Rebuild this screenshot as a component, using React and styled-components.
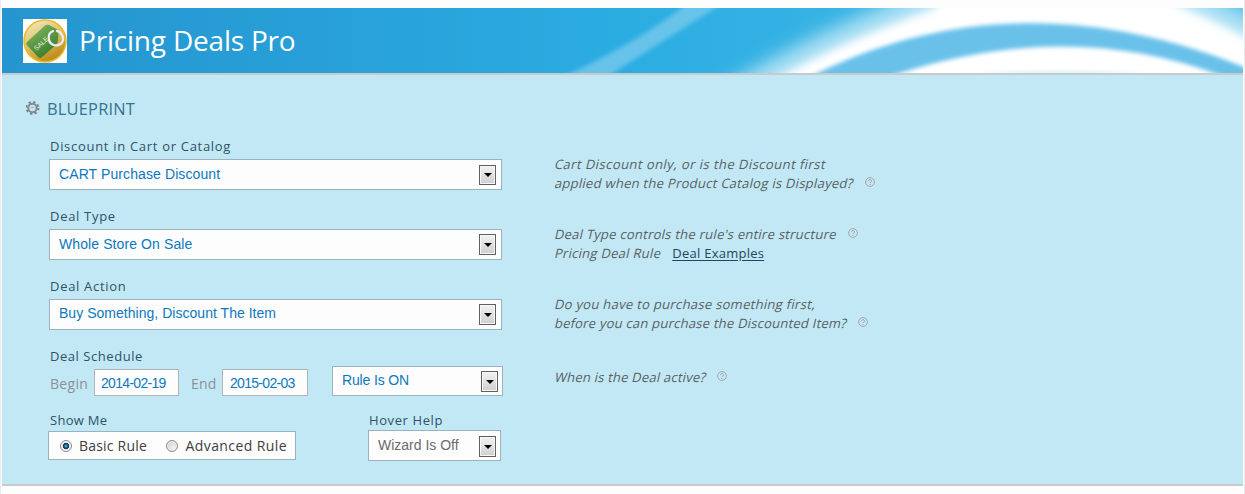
import React from "react";
import styled, { createGlobalStyle } from "styled-components";

const Global = createGlobalStyle`
  *, *::before, *::after { box-sizing: border-box; }
  html, body { margin: 0; background: #fdfdfd; overflow: hidden; }
  body { font-family: "Open Sans", "Noto Sans", sans-serif; }
`;

const Page = styled.div`
  height: 494px;
  padding: 8px 2px 0 2px;
  background: #fdfdfd;
  box-shadow: inset 1px 0 #ececec, inset -1px 0 #ececec;
`;

const Banner = styled.header`
  position: relative;
  height: 67px;
  display: flex;
  align-items: center;
  gap: 12px;
  padding: 0 21px 0 21px;
  border-bottom: 2px solid #c9cacb;
  overflow: hidden;
`;

const BannerArt = styled.svg`
  position: absolute;
  inset: 0;
  display: block;
`;

const Logo = styled.svg`
  position: relative;
  width: 44px;
  height: 44px;
  display: block;
`;

const Title = styled.h1`
  position: relative;
  margin: 0 0 2px;
  font-weight: 400;
  font-size: 28px;
  line-height: 40px;
  letter-spacing: ${(p) => p.$track || 0}px;
  color: #fff;
  white-space: nowrap;
`;

const Panel = styled.main`
  height: 411px;
  padding: 22px 0 0 24px;
  background: #c2e8f5;
  border-bottom: 2px solid #c9cacb;
`;

const SectionHead = styled.div`
  display: flex;
  align-items: center;
  gap: 7px;
  height: 24px;
`;

const SectionTitle = styled.h2`
  margin: 0;
  font-weight: 400;
  font-size: 16.4px;
  line-height: 24px;
  letter-spacing: ${(p) => p.$track || 0}px;
  color: #36738f;
`;

const Columns = styled.div`
  display: grid;
  grid-template-columns: 455px auto;
  column-gap: 51px;
  padding: 16px 0 0 23px;
`;

const Fields = styled.div`
  display: flex;
  flex-direction: column;
`;

const Field = styled.div`
  height: ${(p) => p.$h}px;
`;

const Label = styled.div`
  padding-left: ${(p) => p.$pad || 1}px;
  height: ${(p) => p.$h || 22}px;
  font-size: 13px;
  line-height: 18px;
  letter-spacing: ${(p) => p.$track || 0.7}px;
  color: #2f5266;
  white-space: nowrap;
`;

const Select = styled.div`
  display: flex;
  justify-content: space-between;
  align-items: flex-start;
  width: ${(p) => p.$w}px;
  height: ${(p) => p.$h || 31}px;
  padding: 5px ${(p) => p.$right || 5}px 0 9px;
  background: #fdfdfd;
  border: 1px solid #9bb3bd;
  color: ${(p) => (p.$muted ? "#6c6c6c" : "#0d78bf")};
  font-family: "Liberation Sans", Arial, sans-serif;
  font-size: 14px;
  line-height: ${(p) => p.$lh || 18}px;
  letter-spacing: ${(p) => p.$track || 0}px;
  white-space: nowrap;
`;

const ArrowBox = styled.span`
  display: flex;
  align-items: center;
  justify-content: center;
  width: 17px;
  height: ${(p) => p.$h || 21}px;
  margin-top: ${(p) => p.$drop || 0}px;
  border: 1px solid #606060;
  background: linear-gradient(#f2f2f2, #cfcfcf);
  box-shadow: inset 0 0 0 1px #f7f7f7;
`;

const Schedule = styled.div`
  display: flex;
  align-items: flex-start;
  margin-top: -3px;
`;

const Caption = styled.span`
  width: ${(p) => p.$w}px;
  padding: ${(p) => p.$pad || "0"};
  margin-top: 8px;
  font-size: 14px;
  line-height: 20px;
  letter-spacing: ${(p) => p.$track || 0}px;
  color: #8a9195;
`;

const DateBox = styled.div`
  width: ${(p) => p.$w}px;
  height: 27px;
  margin: 3px ${(p) => p.$gap}px 0 0;
  padding-left: ${(p) => p.$pad || 6}px;
  border: 1px solid #adb5b8;
  background: #fdfdfd;
  color: #0d78bf;
  font: 14px/26px "Liberation Sans", Arial, sans-serif;
  letter-spacing: -0.7px;
`;

const Bottom = styled.div`
  display: flex;
  justify-content: space-between;
  width: 453px;
  margin-left: -1px;
`;

const RadioGroup = styled.div`
  display: flex;
  align-items: center;
  width: 248px;
  height: 29px;
  padding-left: 11px;
  background: #fdfdfd;
  border: 1px solid #9bb3bd;
`;

const Radio = styled.span`
  width: 12px;
  height: 12px;
  flex: none;
  border: 1px solid #8b8b8b;
  border-radius: 50%;
  box-shadow: inset 0 0 0 1px #f4f4f4;
  background: ${(p) =>
    p.$on
      ? "radial-gradient(circle at 50% 50%, #5fc4ea 0, #155b86 25%, #0c2f4a 40%, #e8eaea 50%)"
      : "radial-gradient(circle at 65% 65%, #f1f1f1, #c9cbce)"};
`;

const RadioText = styled.span`
  padding-left: ${(p) => p.$pad}px;
  width: ${(p) => p.$w}px;
  font-size: 14px;
  line-height: 20px;
  letter-spacing: ${(p) => p.$track || 0}px;
  color: #404040;
  white-space: nowrap;
`;

const Notes = styled.div`
  padding-top: 18px;
`;

const Note = styled.div`
  height: ${(p) => p.$h || 70}px;
  font-size: 13px;
  line-height: 19px;
  color: #586063;
`;

const NoteLine = styled.div`
  display: flex;
  align-items: center;
  height: 19px;
  white-space: nowrap;
`;

const Slanted = styled.span`
  display: block;
  transform: skewX(-13deg);
  letter-spacing: ${(p) => p.$track || 0.28}px;
`;

const Help = styled.svg`
  flex: none;
  width: 10px;
  height: 10px;
  margin: 0 0 3px 11px;
`;

const Link = styled.a`
  margin-left: 11px;
  color: #24465a;
  text-decoration: underline;
  text-underline-offset: 2px;
  letter-spacing: 0.25px;
`;

function HelpIcon() {
  return (
    <Help viewBox="0 0 10 10" fill="none" stroke="#a3a6a9">
      <circle cx="5" cy="5" r="4.4" />
      <path d="M3.4 4.1c0-2 3.2-2 3.2-.1C6.6 5 5 5 5 6.1M5 7v1" />
    </Help>
  );
}

function Arrow({ drop, h }) {
  return (
    <ArrowBox $drop={drop} $h={h}>
      <svg width="8" height="4" viewBox="0 0 8 4">
        <path d="M0 0h8L4 4z" fill="#000" />
      </svg>
    </ArrowBox>
  );
}

function Gear() {
  return (
    <svg width="14" height="16" viewBox="0.5 1 14 16" fill="none">
      <circle cx="7" cy="8" r="5.9" stroke="#7b8a90" strokeWidth="2.2" strokeDasharray="2.3 2.333" />
      <circle cx="7" cy="8" r="4.2" stroke="#828b8f" strokeWidth="2" />
      <path d="M5.5 7.5h3" stroke="#9aabb2" />
    </svg>
  );
}

function SaleLogo() {
  return (
    <Logo viewBox="0 0 44 44">
      <defs>
        <linearGradient id="gold" x1="0" y1="0" x2="0.5" y2="1">
          <stop offset="0" stopColor="#f3edcf" />
          <stop offset="0.5" stopColor="#dfc76f" />
          <stop offset="1" stopColor="#bd8d1d" />
        </linearGradient>
        <linearGradient id="tag" x1="0" y1="0" x2="0.6" y2="1">
          <stop offset="0" stopColor="#8dbb62" />
          <stop offset="1" stopColor="#347d2d" />
        </linearGradient>
      </defs>
      <path fill="#fff" d="M0 0h44v44H0z" />
      <circle cx="22" cy="22" r="21" fill="url(#gold)" stroke="#f3b91d" strokeWidth="1.5" />
      <path
        d="M3.5 23.5 22 6.5q2-1.4 4-.4l7.5 4q2 1 2 3l-.7 9q-.2 2-1.4 3.3L18.5 38.4q-1.8 1.2-3.3-.3L3.8 26.2q-1-1.4-.3-2.7z"
        fill="url(#tag)"
      />
      <path d="M30 12.2 C24 14 24 25 32 26.3 C38 27 41.5 22 39.5 17 C38.5 14.5 36.5 12.5 34 12" fill="none" stroke="#ebeaf1" strokeWidth="2.3" strokeLinecap="round" />
      <text
        x="18"
        y="27"
        transform="rotate(-43 18 24.5)"
        textAnchor="middle"
        fontFamily="Liberation Sans, Arial, sans-serif"
        fontSize="6.6"
        fill="#e6f1dd"
      >
        SALE
      </text>
    </Logo>
  );
}

function Swoosh() {
  return (
    <BannerArt width="1241" height="65" viewBox="2 8 1241 65" preserveAspectRatio="none">
      <defs>
        <linearGradient id="sky">
          <stop offset="0" stopColor="#2595cf" />
          <stop offset="0.25" stopColor="#289fd8" />
          <stop offset="0.5" stopColor="#2bade2" />
          <stop offset="0.68" stopColor="#38b3e4" />
          <stop offset="1" stopColor="#4cbae8" />
        </linearGradient>
        <filter id="b2" x="-10%" y="-40%" width="120%" height="180%"><feGaussianBlur stdDeviation="2.2" /></filter>
        <filter id="b4" x="-10%" y="-40%" width="120%" height="180%"><feGaussianBlur stdDeviation="4" /></filter>
        <filter id="b9" x="-20%" y="-60%" width="140%" height="220%"><feGaussianBlur stdDeviation="9" /></filter>
      </defs>
      <path d="M2 8h1242v65H2z" fill="url(#sky)" />
      <path d="M556 80 Q640 42 692 0 L728 0 Q668 38 602 80z" fill="#8fd2f0" opacity=".6" filter="url(#b2)" />
      <path d="M715 92 Q800 40 900 0 L940 -20 L1180 -20 L1270 28 L1270 60 L900 30 L780 90z" fill="#c4eaf8" opacity=".85" filter="url(#b9)" />
      <path
        d="M762 86 Q850 36 930 10 L960 -10 L1140 -10 Q1200 12 1270 50 L1270 110 L762 110z"
        fill="#fff"
        filter="url(#b4)"
      />
      <path
        d="M800 82 C930 12 1090 -3 1270 78 L1270 97 L1222 76 C1120 37 1010 37 897 74 L870 86z"
        fill="#69c1ea"
        filter="url(#b2)"
      />
      <path d="M960 76 Q1060 66 1160 76z" fill="#d8eff9" filter="url(#b2)" />
    </BannerArt>
  );
}

export default function App() {
  return (
    <>
      <Global />
      <Page>
        <Banner>
          <Swoosh />
          <SaleLogo />
          <Title $track={-0.2}>Pricing Deals Pro</Title>
        </Banner>
        <Panel>
          <SectionHead>
            <Gear />
            <SectionTitle $track={0.22}>BLUEPRINT</SectionTitle>
          </SectionHead>
          <Columns>
            <Fields>
              <Field $h={70}>
                <Label>Discount in Cart or Catalog</Label>
                <Select $w={453} $track={0.1}>CART Purchase Discount<Arrow h={20} /></Select>
              </Field>
              <Field $h={70}>
                <Label>Deal Type</Label>
                <Select $w={453} $track={0.1}>Whole Store On Sale<Arrow drop={-1} /></Select>
              </Field>
              <Field $h={70}>
                <Label>Deal Action</Label>
                <Select $w={453} $lh={16} $track={0.03}>Buy Something, Discount The Item<Arrow drop={-1} /></Select>
              </Field>
              <Field $h={64}>
                <Label $track={0.55}>Deal Schedule</Label>
                <Schedule>
                  <Caption $w={45} $pad="0 0 0 1px" $track={0.3}>Begin</Caption>
                  <DateBox $w={85} $gap={12}>2014-02-19</DateBox>
                  <Caption $w={31} $track={0.2}>End</Caption>
                  <DateBox $w={86} $gap={24} $pad={7}>2015-02-03</DateBox>
                  <Select $w={171} $h={30} $right={4} $lh={16} $track={-0.15}>Rule Is ON<Arrow drop={-1} /></Select>
                </Schedule>
              </Field>
              <Bottom>
                <div>
                  <Label $h={20} $pad={2} $track={0.3}>Show Me</Label>
                  <RadioGroup>
                    <Radio $on />
                    <RadioText $pad={7} $w={94} $track={0.2}>Basic Rule</RadioText>
                    <Radio />
                    <RadioText $pad={8} $w={118} $track={0.4}>Advanced Rule</RadioText>
                  </RadioGroup>
                </div>
                <div>
                  <Label $h={19} $track={0.6}>Hover Help</Label>
                  <Select $w={133} $right={4} $muted>Wizard Is Off<Arrow /></Select>
                </div>
              </Bottom>
            </Fields>
            <Notes>
              <Note>
                <NoteLine><Slanted $track={0.45}>Cart Discount only, or is the Discount first</Slanted></NoteLine>
                <NoteLine><Slanted>applied when the Product Catalog is Displayed?</Slanted><HelpIcon /></NoteLine>
              </Note>
              <Note>
                <NoteLine><Slanted $track={0.26}>Deal Type controls the rule's entire structure</Slanted><HelpIcon /></NoteLine>
                <NoteLine><Slanted>Pricing Deal Rule</Slanted><Link>Deal Examples</Link></NoteLine>
              </Note>
              <Note $h={73}>
                <NoteLine><Slanted $track={0.3}>Do you have to purchase something first,</Slanted></NoteLine>
                <NoteLine><Slanted $track={0.23}>before you can purchase the Discounted Item?</Slanted><HelpIcon /></NoteLine>
              </Note>
              <Note>
                <NoteLine><Slanted $track={0.22}>When is the Deal active?</Slanted><HelpIcon /></NoteLine>
              </Note>
            </Notes>
          </Columns>
        </Panel>
      </Page>
    </>
  );
}
